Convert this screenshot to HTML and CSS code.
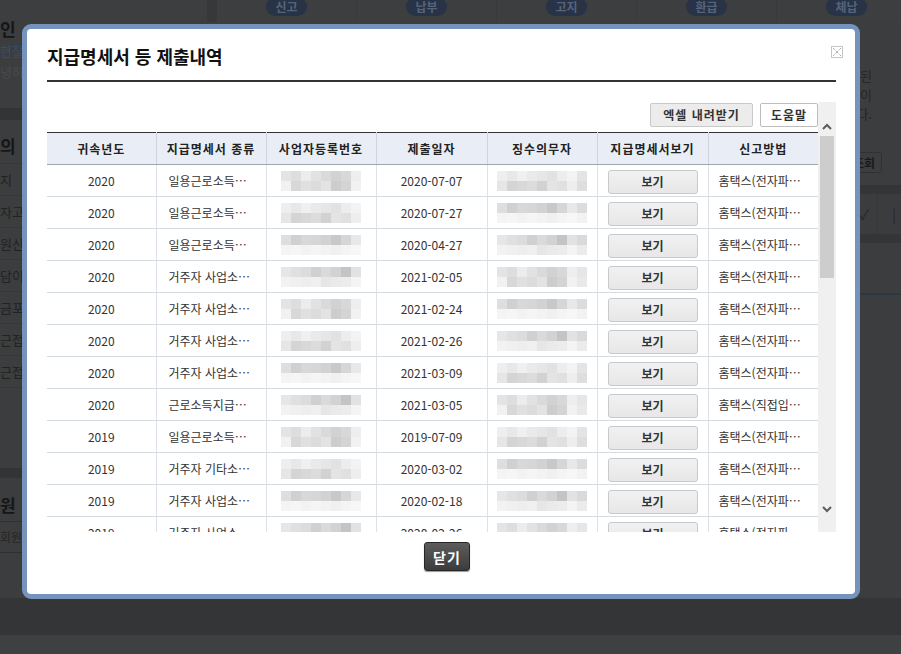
FILE: index.html
```html
<!DOCTYPE html>
<html lang="ko">
<head>
	<meta charset="utf-8">
	<title>지급명세서 등 제출내역</title>
	<link rel="stylesheet" href="styles.css">
</head>
<body>
	<div class="page">
		<div class="topbar">
			<div class="topbar-left"></div>
			<div class="topbar-gap"></div>
			<ul class="steps">
				<li><span>신고</span></li>
				<li><span>납부</span></li>
				<li><span>고지</span></li>
				<li><span>환급</span></li>
				<li><span>체납</span></li>
			</ul>
		</div>
		<div class="content">
			<div class="lnb">
				<div class="lnb-box first">
					<p class="lnb-title">인</p>
					<p class="lnb-text blue">현찰영수증</p>
					<p class="lnb-text">녕하세요</p>
				</div>
				<div class="lnb-band"></div>
				<div class="lnb-box menu">
					<p class="lnb-title">의</p>
					<ul class="lnb-list">
						<li>지</li>
						<li>자고</li>
						<li>원신고</li>
						<li>담이</li>
						<li>금포</li>
						<li>근접</li>
						<li>근접</li>
						<li></li>
					</ul>
				</div>
				<div class="lnb-band thin"></div>
				<div class="lnb-box">
					<p class="lnb-title">원</p>
					<div class="lnb-input">회원가입</div>
				</div>
			</div>
			<div class="center"></div>
			<div class="side">
				<div class="side-text">
					<p>신고된</p>
					<p>자료이</p>
					<p>됩니다.</p>
				</div>
				<div class="side-btn"><span>조회</span></div>
				<div class="side-band"></div>
				<div class="side-row">
					<span class="cell">✓</span>
					<span class="cell last">|</span>
				</div>
				<div class="side-band"></div>
				<div class="side-line"></div>
			</div>
		</div>
		<div class="footer"></div>
		<div class="footer-bottom"></div>
	</div>

	<div class="modal">
		<a class="modal-close" href="#">
			<svg width="12" height="12" viewBox="0 0 12 12">
				<rect x="0.5" y="0.5" width="11" height="11" fill="none" stroke="#8a8a8a" stroke-dasharray="1 1"/>
				<path d="M2 2L10 10M10 2L2 10" stroke="#8a8a8a" stroke-dasharray="1 1"/>
			</svg>
		</a>
		<h2 class="modal-title">지급명세서 등 제출내역</h2>
		<div class="grid-wrap">
			<div class="grid-body">
				<div class="grid-tools">
					<button class="btn">엑셀 내려받기</button>
					<button class="btn white">도움말</button>
				</div>
				<table class="grid">
					<colgroup>
						<col style="width:109px">
						<col style="width:110px">
						<col style="width:110px">
						<col style="width:111px">
						<col style="width:110px">
						<col style="width:111px">
						<col style="width:110px">
					</colgroup>
					<thead>
						<tr>
							<th>귀속년도</th>
							<th>지급명세서 종류</th>
							<th>사업자등록번호</th>
							<th>제출일자</th>
							<th>징수의무자</th>
							<th>지급명세서보기</th>
							<th>신고방법</th>
						</tr>
					</thead>
					<tbody>
						<tr>
							<td>2020</td><td class="l">일용근로소득…</td><td><span class="mz m1"></span></td><td>2020-07-07</td><td><span class="mz wide m2"></span></td><td><button class="view">보기</button></td><td class="r">홈택스(전자파…</td>
						</tr>
						<tr>
							<td>2020</td><td class="l">일용근로소득…</td><td><span class="mz m2"></span></td><td>2020-07-27</td><td><span class="mz wide m3"></span></td><td><button class="view">보기</button></td><td class="r">홈택스(전자파…</td>
						</tr>
						<tr>
							<td>2020</td><td class="l">일용근로소득…</td><td><span class="mz m3"></span></td><td>2020-04-27</td><td><span class="mz wide m4"></span></td><td><button class="view">보기</button></td><td class="r">홈택스(전자파…</td>
						</tr>
						<tr>
							<td>2020</td><td class="l">거주자 사업소…</td><td><span class="mz m4"></span></td><td>2021-02-05</td><td><span class="mz wide m1"></span></td><td><button class="view">보기</button></td><td class="r">홈택스(전자파…</td>
						</tr>
						<tr>
							<td>2020</td><td class="l">거주자 사업소…</td><td><span class="mz m1"></span></td><td>2021-02-24</td><td><span class="mz wide m3"></span></td><td><button class="view">보기</button></td><td class="r">홈택스(전자파…</td>
						</tr>
						<tr>
							<td>2020</td><td class="l">거주자 사업소…</td><td><span class="mz m2"></span></td><td>2021-02-26</td><td><span class="mz wide m4"></span></td><td><button class="view">보기</button></td><td class="r">홈택스(전자파…</td>
						</tr>
						<tr>
							<td>2020</td><td class="l">거주자 사업소…</td><td><span class="mz m3"></span></td><td>2021-03-09</td><td><span class="mz wide m2"></span></td><td><button class="view">보기</button></td><td class="r">홈택스(전자파…</td>
						</tr>
						<tr>
							<td>2020</td><td class="l">근로소득지급…</td><td><span class="mz m4"></span></td><td>2021-03-05</td><td><span class="mz wide m1"></span></td><td><button class="view">보기</button></td><td class="r">홈택스(직접입…</td>
						</tr>
						<tr>
							<td>2019</td><td class="l">일용근로소득…</td><td><span class="mz m1"></span></td><td>2019-07-09</td><td><span class="mz wide m2"></span></td><td><button class="view">보기</button></td><td class="r">홈택스(전자파…</td>
						</tr>
						<tr>
							<td>2019</td><td class="l">거주자 기타소…</td><td><span class="mz m2"></span></td><td>2020-03-02</td><td><span class="mz wide m3"></span></td><td><button class="view">보기</button></td><td class="r">홈택스(전자파…</td>
						</tr>
						<tr>
							<td>2019</td><td class="l">거주자 사업소…</td><td><span class="mz m3"></span></td><td>2020-02-18</td><td><span class="mz wide m4"></span></td><td><button class="view">보기</button></td><td class="r">홈택스(전자파…</td>
						</tr>
						<tr>
							<td>2019</td><td class="l">거주자 사업소…</td><td><span class="mz m4"></span></td><td>2020-02-26</td><td><span class="mz wide m1"></span></td><td><button class="view">보기</button></td><td class="r">홈택스(전자파…</td>
						</tr>
					</tbody>
				</table>
			</div>
			<div class="vscroll">
				<span class="vs-arrow">
					<svg width="10" height="7" viewBox="0 0 10 7"><polyline points="1,6 5,2 9,6" fill="none" stroke="#5c5c5c" stroke-width="2"/></svg>
				</span>
				<span class="vs-thumb"></span>
				<span class="vs-arrow down">
					<svg width="10" height="7" viewBox="0 0 10 7"><polyline points="1,1 5,5 9,1" fill="none" stroke="#5c5c5c" stroke-width="2"/></svg>
				</span>
			</div>
		</div>
		<div class="modal-foot">
			<button class="btn-close">닫기</button>
		</div>
	</div>
</body>
</html>
```

FILE: styles.css
```css
*{
	box-sizing: border-box;
}
html, body{
	margin: 0;
	padding: 0;
}
body{
	width: 901px;
	height: 654px;
	overflow: hidden;
	position: relative;
	background: #3c3d3f;
	font-family: "Noto Sans CJK KR", "Liberation Sans", sans-serif;
	color: #222;
}
p{
	margin: 0;
}
ul{
	margin: 0;
	padding: 0;
	list-style: none;
}

/* 뒤쪽 페이지 (어둡게 깔린 화면) */
.page{
	width: 901px;
}
.topbar{
	display: flex;
	height: 22px;
	background: #3d3e40;
}
.topbar-left{
	width: 207px;
}
.topbar-gap{
	width: 10px;
	background: #37383a;
}
.steps{
	display: flex;
	flex: 1;
	overflow: hidden;
}
.steps li{
	flex: none;
	width: 140px;
	border-right: 1px solid #38393b;
	display: flex;
	justify-content: center;
}
.steps span{
	display: block;
	width: 41px;
	height: 19px;
	margin-top: -3px;
	border-radius: 10px;
	background: #283347;
	color: #56647a;
	font-size: 12px;
	font-weight: bold;
	line-height: 19px;
	text-align: center;
}
.content{
	display: grid;
	grid-template-columns: 205px 1fr 250px;
	height: 576px;
}
.lnb-box{
	background: #3c3d3f;
}
.lnb-box.first{
	height: 88px;
}
.lnb-box.menu{
	height: 348px;
	padding-top: 17px;
}
.lnb-title{
	font-size: 17px;
	font-weight: bold;
	line-height: 18px;
	color: #161616;
	white-space: nowrap;
}
.first .lnb-title{
	margin-top: -2px;
	margin-bottom: 2px;
}
.menu .lnb-title{
	margin-bottom: 8px;
}
.lnb-text{
	font-size: 13px;
	line-height: 21px;
	color: #4a4a4a;
	white-space: nowrap;
}
.lnb-text.blue{
	color: #2e4f76;
}
.lnb-band{
	height: 12px;
	background: #333436;
}
.lnb-band.thin{
	height: 10px;
}
.lnb-list li{
	height: 32px;
	border-top: 1px solid #363739;
	font-size: 13px;
	line-height: 31px;
	color: #222;
	white-space: nowrap;
}
.lnb-box:last-child{
	padding-top: 18px;
}
.lnb-box:last-child .lnb-title{
	margin-bottom: 7px;
}
.lnb-input{
	height: 32px;
	border: 1px solid #2f3032;
	border-left: 0;
	font-size: 12px;
	line-height: 30px;
	color: #262626;
	white-space: nowrap;
}
.side-text{
	margin-top: 44px;
	padding-right: 29px;
	text-align: right;
	font-size: 13px;
	line-height: 19px;
	color: #262626;
}
.side-btn{
	display: flex;
	justify-content: flex-end;
	margin-top: 29px;
	padding-right: 19px;
}
.side-btn span{
	display: block;
	height: 21px;
	padding: 0 6px;
	border: 1px solid #303133;
	border-radius: 3px;
	font-size: 12px;
	font-weight: bold;
	line-height: 19px;
	color: #1a1a1a;
}
.side-band{
	height: 9px;
	margin-top: 12px;
	background: #343537;
}
.side-row{
	display: flex;
	justify-content: flex-end;
	height: 40px;
	background: #3b3c3e;
}
.side-row + .side-band{
	margin-top: 0;
}
.side-row .cell{
	width: 40px;
	padding-right: 8px;
	text-align: right;
	font-size: 14px;
	line-height: 40px;
	color: #262626;
	border-right: 1px solid #363739;
}
.side-row .cell.last{
	width: 23px;
	padding-right: 5px;
	border-right: 0;
}
.side-line{
	height: 2px;
	margin-top: 50px;
	background: #2c3644;
}
.footer{
	height: 37px;
	background: #343537;
}
.footer-bottom{
	height: 19px;
	background: #3f4042;
}

/* 팝업 */
.modal{
	position: absolute;
	left: 22px;
	top: 24px;
	width: 838px;
	height: 575px;
	padding: 0 19px 0 20px;
	border: 5px solid #7593bb;
	border-radius: 9px;
	background: #fff;
}
.modal-close{
	position: absolute;
	top: 17px;
	right: 12px;
	display: block;
	width: 12px;
	height: 12px;
	line-height: 0;
}
.modal-title{
	margin: 0;
	padding: 17px 0 14px;
	border-bottom: 2px solid #333;
	font-size: 18px;
	line-height: 20px;
	font-weight: bold;
	color: #111;
}
.grid-wrap{
	display: flex;
	height: 430px;
	margin-top: 20px;
}
.grid-body{
	flex: 1;
	overflow: hidden;
}
.grid-tools{
	display: flex;
	justify-content: flex-end;
	gap: 7px;
	padding-top: 1px;
	margin-bottom: 5px;
}
.btn{
	height: 24px;
	padding: 0;
	border: 1px solid #c9c9c9;
	border-radius: 2px;
	background: #ececec;
	font: bold 12px "Noto Sans CJK KR", sans-serif;
	line-height: 22px;
	color: #333;
	letter-spacing: 1px;
	white-space: nowrap;
}
.btn:first-child{
	width: 103px;
}
.btn.white{
	width: 58px;
	background: #fff;
	border-color: #bdbdbd;
}
.grid{
	width: 100%;
	border-collapse: collapse;
	table-layout: fixed;
	border-top: 1px solid #333;
	font-size: 12px;
	color: #333;
}
.grid th{
	height: 32px;
	padding: 0;
	background: #e9eef6;
	border-bottom: 1px solid #9ea6b0;
	border-left: 1px solid #cdd4dd;
	font-weight: bold;
	color: #222;
	letter-spacing: 1px;
}
.grid td{
	height: 32px;
	padding: 0;
	border-bottom: 1px solid #d4dbe2;
	border-left: 1px solid #dce2e8;
	text-align: center;
	white-space: nowrap;
	overflow: hidden;
}
.grid th:first-child,
.grid td:first-child{
	border-left: 0;
}
.grid td.l{
	text-align: left;
	padding-left: 12px;
}
.grid td.r{
	text-align: left;
	padding-left: 10px;
}
.view{
	display: block;
	width: 90px;
	height: 24px;
	margin: 2px auto 0;
	border: 1px solid #c9c9c9;
	border-radius: 3px;
	background: linear-gradient(#f1f1f1, #e7e7e7);
	font: bold 12px "Noto Sans CJK KR", sans-serif;
	color: #333;
}

/* 모자이크 처리된 칸 */
.mz{
	display: inline-block;
	vertical-align: middle;
	width: 80px;
	height: 20px;
	background-size: 100px 10px;
	background-position: 0 0, 0 10px;
	background-repeat: no-repeat;
}
.mz.wide{
	width: 90px;
}
.m1{
	background-image:
		linear-gradient(90deg, #e4e4e4 0 10px, #dedede 10px 20px, #ececec 20px 30px, #e2e2e2 30px 40px, #dadada 40px 50px, #d2d2d2 50px 60px, #d8d8d8 60px 70px, #eeeeee 70px 80px, #e6e6e6 80px 90px, #f0f0f0 90px 100px),
		linear-gradient(90deg, #f1f1f1 0 10px, #d8d8d8 10px 20px, #e0e0e0 20px 30px, #dcdcdc 30px 40px, #e3e3e3 40px 50px, #cdcdcd 50px 60px, #d4d4d4 60px 70px, #f2f2f2 70px 80px, #e9e9e9 80px 90px, #f4f4f4 90px 100px);
}
.m2{
	background-image:
		linear-gradient(90deg, #eeeeee 0 10px, #e8e8e8 10px 20px, #f0f0f0 20px 30px, #eaeaea 30px 40px, #e6e6e6 40px 50px, #e2e2e2 50px 60px, #ededed 60px 70px, #f3f3f3 70px 80px, #e4e4e4 80px 90px, #f2f2f2 90px 100px),
		linear-gradient(90deg, #e6e6e6 0 10px, #d4d4d4 10px 20px, #d8d8d8 20px 30px, #dcdcdc 30px 40px, #d2d2d2 40px 50px, #e4e4e4 50px 60px, #e0e0e0 60px 70px, #eeeeee 70px 80px, #dedede 80px 90px, #f0f0f0 90px 100px);
}
.m3{
	background-image:
		linear-gradient(90deg, #dedede 0 10px, #d0d0d0 10px 20px, #d8d8d8 20px 30px, #d6d6d6 30px 40px, #d2d2d2 40px 50px, #c8c8c8 50px 60px, #d6d6d6 60px 70px, #e8e8e8 70px 80px, #dcdcdc 80px 90px, #ececec 90px 100px),
		linear-gradient(90deg, #f4f4f4 0 10px, #f6f6f6 10px 20px, #f2f2f2 20px 30px, #f5f5f5 30px 40px, #f3f3f3 40px 50px, #f0f0f0 50px 60px, #f4f4f4 60px 70px, #f7f7f7 70px 80px, #f2f2f2 80px 90px, #f6f6f6 90px 100px);
}
.m4{
	background-image:
		linear-gradient(90deg, #e6e6e6 0 10px, #e0e0e0 10px 20px, #dcdcdc 20px 30px, #d0d0d0 30px 40px, #dadada 40px 50px, #d2d2d2 50px 60px, #c4c4c4 60px 70px, #e2e2e2 70px 80px, #dadada 80px 90px, #eeeeee 90px 100px),
		linear-gradient(90deg, #f2f2f2 0 10px, #f0f0f0 10px 20px, #eeeeee 20px 30px, #f0f0f0 30px 40px, #e6e6e6 40px 50px, #eaeaea 50px 60px, #ececec 60px 70px, #f4f4f4 70px 80px, #ebebeb 80px 90px, #f5f5f5 90px 100px);
}

/* 세로 스크롤바 */
.vscroll{
	display: flex;
	flex-direction: column;
	align-items: center;
	width: 18px;
	padding: 16px 0 14px;
	background: #f0f0f0;
}
.vs-arrow{
	display: flex;
	align-items: center;
	justify-content: center;
	height: 17px;
	width: 18px;
}
.vs-arrow.down{
	margin-top: auto;
}
.vs-thumb{
	display: block;
	width: 14px;
	height: 142px;
	margin-top: 1px;
	background: #cdcdcd;
}
.modal-foot{
	margin-top: 10px;
	padding-left: 11px;
	text-align: center;
}
.btn-close{
	width: 46px;
	height: 29px;
	padding: 0;
	border: 1px solid #262626;
	border-radius: 3px;
	background: linear-gradient(#5c5c5c, #3c3c3c);
	box-shadow: 0 1px 1px #9a9a9a;
	font: bold 14px "Noto Sans CJK KR", sans-serif;
	color: #fff;
	letter-spacing: 1px;
}
```
